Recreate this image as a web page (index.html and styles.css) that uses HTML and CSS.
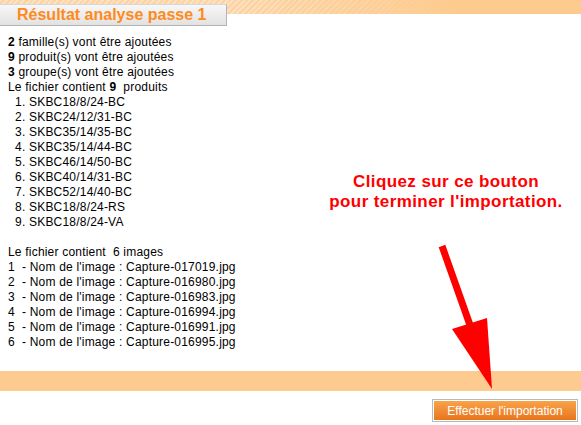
FILE: index.html
```html
<!DOCTYPE html>
<html>
	<head>
		<meta charset="utf-8">
		<title>Résultat analyse passe 1</title>
		<link rel="stylesheet" href="styles.css">
	</head>
	<body>
		<header class="top-band">
			<div class="tab">Résultat analyse passe 1</div>
		</header>
		<main class="content">
			<div><b>2</b> famille(s) vont être ajoutées</div>
			<div><b>9</b> produit(s) vont être ajoutées</div>
			<div><b>3</b> groupe(s) vont être ajoutées</div>
			<div>Le fichier contient <b>9</b>&nbsp; produits</div>
			<ol class="products">
				<li>SKBC18/8/24-BC</li>
				<li>SKBC24/12/31-BC</li>
				<li>SKBC35/14/35-BC</li>
				<li>SKBC35/14/44-BC</li>
				<li>SKBC46/14/50-BC</li>
				<li>SKBC40/14/31-BC</li>
				<li>SKBC52/14/40-BC</li>
				<li>SKBC18/8/24-RS</li>
				<li>SKBC18/8/24-VA</li>
			</ol>
			<div>Le fichier contient &nbsp;6 images</div>
			<div>1 &nbsp;- Nom de l'image : Capture-017019.jpg</div>
			<div>2 &nbsp;- Nom de l'image : Capture-016980.jpg</div>
			<div>3 &nbsp;- Nom de l'image : Capture-016983.jpg</div>
			<div>4 &nbsp;- Nom de l'image : Capture-016994.jpg</div>
			<div>5 &nbsp;- Nom de l'image : Capture-016991.jpg</div>
			<div>6 &nbsp;- Nom de l'image : Capture-016995.jpg</div>
		</main>
		<div class="bottom-band"></div>
		<div class="actions">
			<button class="btn-import">Effectuer l'importation</button>
		</div>

		<!-- annotation -->
		<div class="hint">Cliquez sur ce bouton<br>pour terminer l'importation.</div>
		<svg class="arrow" width="581" height="425" viewBox="0 0 581 425">
			<line x1="442" y1="246" x2="476" y2="342" stroke="#ff0000" stroke-width="7"/>
			<polygon points="452,329 487,318 492,389" fill="#ff0000"/>
		</svg>
	</body>
</html>
```

FILE: styles.css
```css
* {
	margin: 0;
	padding: 0;
	box-sizing: border-box;
}
body {
	position: relative;
	width: 581px;
	height: 425px;
	overflow: hidden;
	font-family: "Liberation Sans", Arial, sans-serif;
	font-size: 12px;
	color: #000;
	background: #fff;
}
.top-band {
	height: 26px;
	padding-top: 4px;
	background:
		linear-gradient(to right, rgba(253, 205, 146, 0) 220px, #fdcb8e 460px) 0 0 / 100% 14px no-repeat,
		repeating-linear-gradient(135deg, #fde2c2 0 2px, #fcd3a4 2px 4px) 0 0 / 100% 14px no-repeat;
}
.tab {
	width: 227px;
	height: 22px;
	padding-left: 17px;
	border-top: 1px solid #d8d8d8;
	border-right: 1px solid #b4b4b4;
	border-bottom: 1px solid #b4b4b4;
	background: linear-gradient(#f7f7f7, #e2e2e2);
	color: #ff8a1c;
	font-weight: bold;
	font-size: 16px;
	line-height: 20px;
}
.content {
	padding: 9px 8px 0;
	line-height: 15px;
	letter-spacing: 0.2px;
}
.products {
	padding-left: 21px;
	margin-bottom: 15px;
}
.bottom-band {
	height: 20px;
	margin-top: 21px;
	background: #fdcb8f;
}
.actions {
	display: flex;
	justify-content: flex-end;
	padding: 8px 3px 0 0;
}
.btn-import {
	width: 146px;
	height: 23px;
	border: 1px solid #b9b9b9;
	box-shadow: inset 0 0 0 1px #fff;
	background: linear-gradient(#f9a64c, #e8721b);
	color: #fff;
	font-family: "Liberation Sans", Arial, sans-serif;
	font-size: 12px;
}
.hint {
	position: absolute;
	left: 318px;
	top: 172px;
	width: 256px;
	text-align: center;
	color: #ff0000;
	font-weight: bold;
	font-size: 17px;
	letter-spacing: 0.4px;
	line-height: 20px;
}
.arrow {
	position: absolute;
	left: 0;
	top: 0;
	pointer-events: none;
}
```
